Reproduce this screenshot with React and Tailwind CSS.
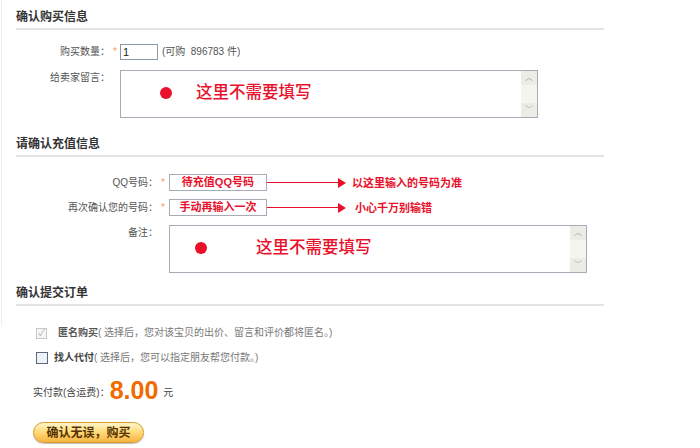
import React from 'react';

const font = { fontFamily: '"Liberation Sans", "Noto Sans CJK SC", sans-serif' };

function Heading({ children }) {
  return (
    <div className="ml-[16px] w-[588px] border-b-2 border-[#e4e4e4] pb-[2px] pt-[8px]">
      <h3 className="text-[12px] font-bold leading-[18px] text-[#333]">{children}</h3>
    </div>
  );
}

function Star() {
  return <span className="mx-[3px] text-[10px] leading-none text-[#f0a070]">*</span>;
}

function FakeTextarea({ width, dotX, textX }) {
  return (
    <div className={`relative h-[48px] ${width} border border-[#a5acb5] bg-white`}>
      <span className={`absolute top-[16px] ${dotX} h-[12px] w-[12px] rounded-full bg-[#e8102a]`} />
      <span className={`absolute top-[8px] ${textX} text-[16.5px] font-medium leading-[26px] text-[#e8102a]`}>这里不需要填写</span>
      <div className="absolute right-0 top-0 flex h-full w-[16px] flex-col justify-between bg-[#f4f4f0]">
        <span className="flex h-[14px] items-center justify-center bg-[#ecece6] text-[8px] leading-none text-[#a9a9a9]">︿</span>
        <span className="flex h-[14px] items-center justify-center bg-[#ecece6] text-[8px] leading-none text-[#a9a9a9]">﹀</span>
      </div>
    </div>
  );
}

function Arrow({ width }) {
  return (
    <div className={`flex items-center ${width}`}>
      <div className="h-px flex-1 bg-[#e8102a]" />
      <div className="h-0 w-0 border-y-[5px] border-l-[8px] border-y-transparent border-l-[#e8102a]" />
    </div>
  );
}

export default function App() {
  return (
    <div className="h-[448px] w-[700px] overflow-hidden bg-white text-[10px] leading-[16px] text-[#555]" style={font}>
      <div className="relative pb-[1px]">
        <div className="absolute left-[1px] top-0 h-[325px] w-px bg-[#ececec]" />

        <Heading>确认购买信息</Heading>

        <div className="mt-[14px] flex h-[16px] items-center">
          <label className="w-[110px] text-right">购买数量：</label>
          <Star />
          <input
            defaultValue="1"
            className="h-[16px] w-[38px] border border-[#8a9aa8] px-[2px] text-[11px] leading-none text-[#222] outline-none"
          />
          <span className="ml-[4px] text-[#555]">(可购&nbsp; 896783 件)</span>
        </div>

        <div className="mt-[10px] flex">
          <label className="w-[110px] text-right">给卖家留言：</label>
          <div className="ml-[10px]">
            <FakeTextarea width="w-[418px]" dotX="left-[39px]" textX="left-[75px]" />
          </div>
        </div>

        <div className="mt-[9px]">
          <Heading>请确认充值信息</Heading>
        </div>

        <div className="mt-[17px] flex h-[17px] items-center">
          <label className="w-[158px] text-right">QQ号码：</label>
          <Star />
          <div className="ml-[1px] flex h-[17px] w-[98px] items-center justify-center border border-[#a5acb5] text-[11px] font-bold leading-none text-[#e8102a]">
            待充值QQ号码
          </div>
          <Arrow width="w-[79px]" />
          <span className="ml-[6px] text-[11px] font-bold text-[#e8102a]">以这里输入的号码为准</span>
        </div>

        <div className="mt-[8px] flex h-[17px] items-center">
          <label className="w-[158px] text-right">再次确认您的号码：</label>
          <Star />
          <div className="ml-[1px] flex h-[17px] w-[98px] items-center justify-center border border-[#a5acb5] text-[11px] font-bold leading-none text-[#e8102a]">
            手动再输入一次
          </div>
          <Arrow width="w-[79px]" />
          <span className="ml-[9px] text-[11px] font-bold text-[#e8102a]">小心千万别输错</span>
        </div>

        <div className="mt-[9px] flex">
          <label className="w-[158px] text-right">备注：</label>
          <div className="ml-[11px]">
            <FakeTextarea width="w-[418px]" dotX="left-[25px]" textX="left-[86px]" />
          </div>
        </div>

        <div className="mt-[3px]">
          <Heading>确认提交订单</Heading>
        </div>
      </div>

      <div className="mt-[18px] flex h-[16px] items-center pl-[36px]">
        <span className="flex h-[11px] w-[11px] items-center justify-center border border-[#c8c8c8] bg-[#f6f6f6] text-[9px] leading-none text-[#b0b0b0]">✓</span>
        <span className="ml-[11px] font-bold text-[#555]">匿名购买</span>
        <span className="text-[#777]">( 选择后，您对该宝贝的出价、留言和评价都将匿名。)</span>
      </div>

      <div className="mt-[9px] flex h-[16px] items-center pl-[36px]">
        <span className="h-[12px] w-[12px] border border-[#5a6a7a] bg-[#eef2f6]" />
        <span className="ml-[6px] font-bold text-[#444]">找人代付</span>
        <span className="text-[#777]">( 选择后，您可以指定朋友帮您付款。)</span>
      </div>

      <div className="mt-[10px] flex h-[28px] items-end pl-[33px]">
        <span className="pb-[3px] text-[#444]">实付款(含运费)：</span>
        <span className="text-[25px] font-bold leading-[28px] text-[#f06a00]" style={{ fontFamily: '"Liberation Sans", sans-serif' }}>8.00</span>
        <span className="mb-[3px] ml-[5px] text-[#444]">元</span>
      </div>

      <div className="mt-[18px] pl-[33px]">
        <button className="h-[21px] w-[111px] rounded-full border border-[#d89a2a] bg-gradient-to-b from-[#fff6c8] via-[#ffd975] to-[#f6b440] text-[12px] font-bold leading-none text-[#553300] shadow-[0_1px_1px_rgba(0,0,0,0.25)]">
          确认无误，购买
        </button>
      </div>
    </div>
  );
}
